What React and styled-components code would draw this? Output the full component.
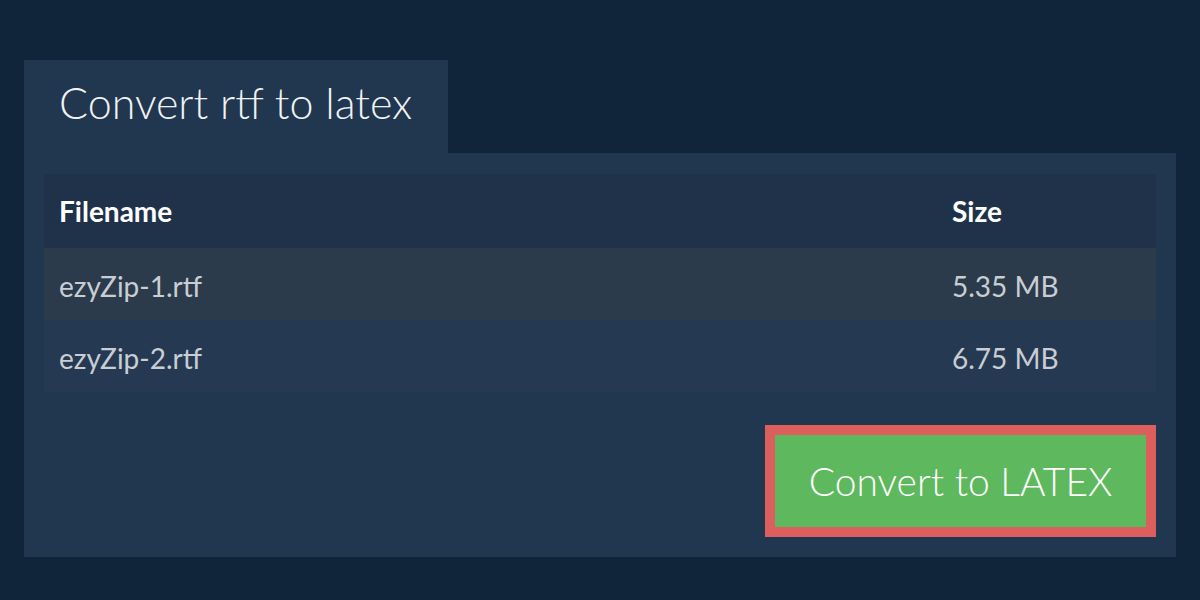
import React from 'react';
import styled, { createGlobalStyle } from 'styled-components';

const GlobalStyle = createGlobalStyle`
  html, body {
    margin: 0;
    padding: 0;
    background: #10243a;
    font-family: Lato, "Noto Sans", sans-serif;
  }
`;

const Page = styled.div`
  width: 1200px;
  height: 600px;
  box-sizing: border-box;
  padding: 60px 24px 0 24px;
`;

const Tab = styled.div`
  display: inline-block;
  background: #21364f;
  padding: 0 36px 0 35px;
  height: 94px;
  box-sizing: border-box;
`;

const Title = styled.h1`
  margin: 0;
  font-weight: 300;
  font-size: 43px;
  line-height: 86px;
  color: #f0f2f4;
`;

const Panel = styled.div`
  background: #21364f;
  width: 1152px;
  box-sizing: border-box;
  padding: 21px 20px 20px 20px;
  margin-top: -1px;
`;

const Table = styled.div`
  display: grid;
  grid-template-columns: 908px 1fr;
`;

const Row = styled.div`
  display: contents;
`;

const Cell = styled.div`
  height: ${p => (p.$head ? '74px' : '72px')};
  display: flex;
  align-items: center;
  padding-top: ${p => (p.$head ? '0' : '3px')};
  box-sizing: border-box;
  padding-left: ${p => (p.$first ? '15px' : '0')};
  background: ${p => p.$bg};
  color: ${p => (p.$head ? '#ffffff' : '#c9ced4')};
  font-weight: ${p => (p.$head ? 700 : 400)};
  font-size: 28px;
`;

const Footer = styled.div`
  display: flex;
  justify-content: flex-end;
  padding-top: 33px;
`;

const Button = styled.button`
  background: #5eb85d;
  border: 10px solid #dc5f5d;
  color: #ffffff;
  font-family: Lato, "Noto Sans", sans-serif;
  font-weight: 300;
  font-size: 39px;
  width: 391px;
  height: 112px;
  box-sizing: border-box;
  padding: 0;
  cursor: pointer;
`;

const rows = [
  { name: 'ezyZip-1.rtf', size: '5.35 MB', bg: '#2c3b4c' },
  { name: 'ezyZip-2.rtf', size: '6.75 MB', bg: '#253a52' },
];

export default function App() {
  return (
    <>
      <GlobalStyle />
      <Page>
        <Tab>
          <Title>Convert rtf to latex</Title>
        </Tab>
        <Panel>
          <Table>
            <Row>
              <Cell $head $first $bg="#1f3249">Filename</Cell>
              <Cell $head $bg="#1f3249">Size</Cell>
            </Row>
            {rows.map(r => (
              <Row key={r.name}>
                <Cell $first $bg={r.bg}>{r.name}</Cell>
                <Cell $bg={r.bg}>{r.size}</Cell>
              </Row>
            ))}
          </Table>
          <Footer>
            <Button>Convert to LATEX</Button>
          </Footer>
        </Panel>
      </Page>
    </>
  );
}
